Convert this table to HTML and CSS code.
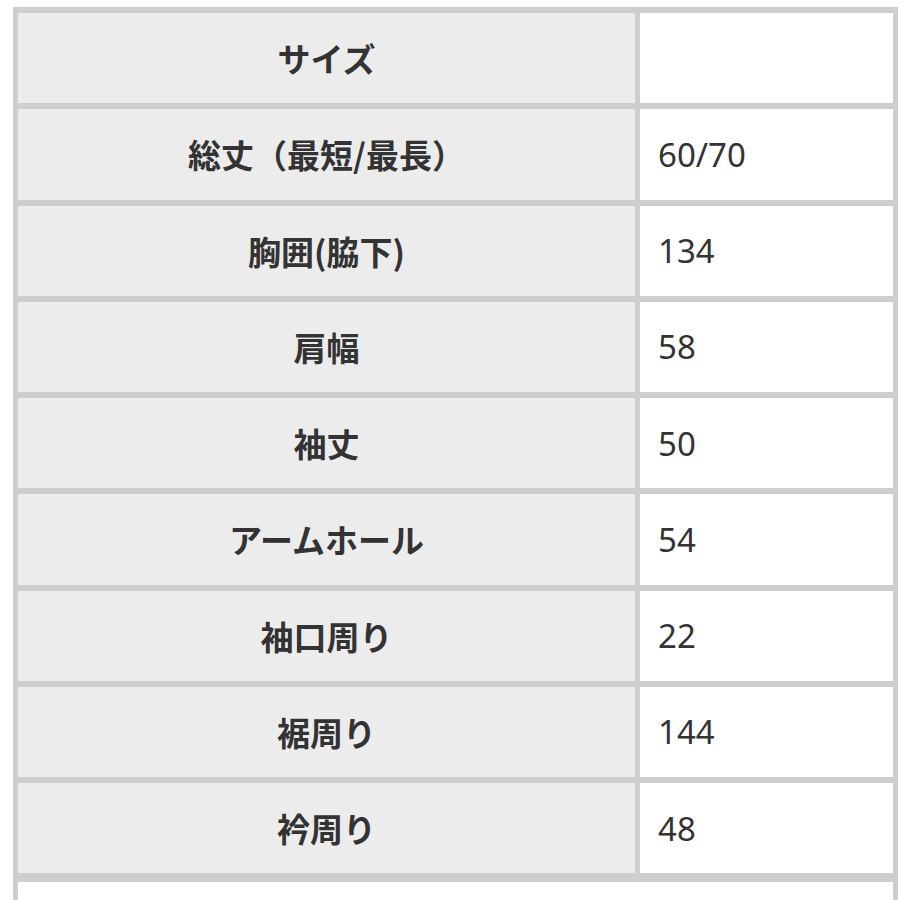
FILE: index.html
```html
<!DOCTYPE html>
<html lang="ja">
<head>
<meta charset="utf-8">
<link rel="stylesheet" href="styles.css">
</head>
<body>
<div class="page">
<table class="spec">
<tbody>
<tr><th>サイズ</th><td></td></tr>
<tr><th>総丈（最短/最長）</th><td>60/70</td></tr>
<tr><th>胸囲(脇下)</th><td>134</td></tr>
<tr><th>肩幅</th><td>58</td></tr>
<tr><th>袖丈</th><td>50</td></tr>
<tr><th>アームホール</th><td>54</td></tr>
<tr><th>袖口周り</th><td>22</td></tr>
<tr><th>裾周り</th><td>144</td></tr>
<tr><th>衿周り</th><td>48</td></tr>
</tbody>
</table>
<div class="next"></div>
</div>
</body>
</html>
```
FILE: styles.css
```css
html, body {
  margin: 0;
  padding: 0;
  background: #ffffff;
  overflow: hidden;
}
.page {
  padding: 7px 2px 0 13px;
  font-family: "Noto Sans", "Noto Sans CJK JP", sans-serif;
  color: #333333;
}
.spec {
  width: 885px;
  border-collapse: separate;
  border-spacing: 5px 6px;
  background: #cecece;
  table-layout: fixed;
  padding: 0;
  margin: 0;
}
.spec th {
  width: 617px;
  height: 90.25px;
  padding: 0;
  background: #ececec;
  font-family: "Noto Sans CJK JP", sans-serif;
  font-weight: bold;
  font-size: 33px;
  text-align: center;
  vertical-align: middle;
  color: #333333;
}
.spec td {
  height: 90.25px;
  padding: 0 0 0 18px;
  background: #ffffff;
  font-size: 33px;
  font-weight: normal;
  vertical-align: middle;
  color: #333333;
}
.next {
  width: 875px;
  height: 40px;
  border: 5px solid #cecece;
  border-top-width: 3px;
  border-bottom: none;
  background: #ffffff;
}
```
